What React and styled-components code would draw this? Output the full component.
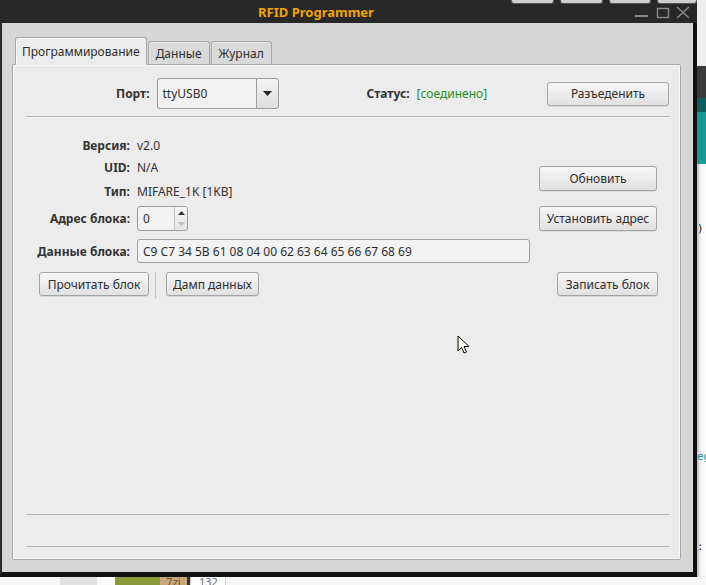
import React from "react";
import styled, { createGlobalStyle } from "styled-components";

const Global = createGlobalStyle`
  html, body { margin: 0; padding: 0; background: #f4f4f4; }
  body {
    font-family: "Noto Sans", "Open Sans", "DejaVu Sans", sans-serif;
    font-size: 12px;
    color: #333;
  }
`;

const Screen = styled.div`
  position: relative;
  width: 706px;
  height: 585px;
  overflow: hidden;
  display: grid;
  grid-template-columns: 697px 9px;
  grid-template-rows: 577px 8px;
  background: #f6f6f6;
`;

/* ---------- desktop behind the window ---------- */

const RightStrip = styled.div`
  grid-column: 2;
  grid-row: 1;
  display: flex;
  flex-direction: column;
  background: #fbfbfb;
  box-shadow: inset 3px 0 3px -1px rgba(0, 0, 0, 0.25);
`;

const Seg = styled.div`
  height: ${(p) => p.$h}px;
  flex: ${(p) => (p.$grow ? 1 : "none")};
  background: ${(p) => p.$bg || "transparent"};
  color: ${(p) => p.$fg || "#222"};
  font-family: "DejaVu Sans Mono", monospace;
  font-size: 11px;
  line-height: ${(p) => p.$h}px;
  white-space: nowrap;
  overflow: hidden;
`;

const BottomStrip = styled.div`
  grid-column: 1 / span 2;
  grid-row: 2;
  display: flex;
  background: #f7f7f7;
`;

const Thumb = styled.div`
  width: ${(p) => p.$w}px;
  background: ${(p) => p.$bg};
  color: ${(p) => p.$fg || "#666"};
  border-left: ${(p) => (p.$line ? "1px solid #cfcfcf" : "none")};
  border-right: ${(p) => (p.$line ? "1px solid #cfcfcf" : "none")};
  font-size: 11px;
  line-height: 8px;
  padding-top: 1px;
  text-align: center;
  overflow: hidden;
`;

/* ---------- window ---------- */

const Window = styled.div`
  grid-column: 1;
  grid-row: 1;
  display: flex;
  flex-direction: column;
  box-shadow: 2px 2px 4px rgba(0, 0, 0, 0.35);
`;

const TitleBar = styled.div`
  position: relative;
  height: 23px;
  flex: none;
  display: flex;
  align-items: center;
  background: #282828;
`;

const Title = styled.div`
  flex: 1;
  text-align: center;
  font-weight: 700;
  font-size: 13px;
  color: #f0a30a;
  padding-top: 1px;
`;

const Controls = styled.svg`
  width: 65px;
  height: 23px;
  flex: none;
`;

const PeekRow = styled.div`
  position: absolute;
  top: 0;
  left: 511px;
  display: flex;
  gap: 6px;
`;

const Peek = styled.div`
  width: ${(p) => p.$w}px;
  height: 3px;
  background: #cfcfcf;
  border: 1px solid #555;
  border-top: none;
  border-radius: 0 0 3px 3px;
`;

const Frame = styled.div`
  flex: 1;
  display: flex;
  flex-direction: column;
  background: #d6d6d6;
  border-left: 2px solid #2a2a2a;
  border-right: 4px solid #111;
  border-bottom: 5px solid #111;
  padding: 15px 12px 12px 10px;
  min-height: 0;
`;

const TabBar = styled.div`
  display: flex;
  align-items: flex-end;
  gap: 1px;
  height: 27px;
  padding-left: 3px;
  margin-bottom: -1px;
  position: relative;
  z-index: 1;
`;

const Tab = styled.div`
  box-sizing: border-box;
  height: ${(p) => (p.$active ? 28 : 24)}px;
  padding: 0 ${(p) => (p.$active ? 6 : 7)}px;
  display: flex;
  align-items: center;
  background: ${(p) => (p.$active ? "#ececec" : "#d9d9d9")};
  border: 1px solid #a7a7a7;
  border-bottom: ${(p) => (p.$active ? "1px solid #ececec" : "1px solid #a9a9a9")};
  border-radius: 3px 3px 0 0;
  color: #2e2e2e;
  box-shadow: ${(p) => (p.$active ? "inset 1px 1px 0 #fafafa" : "inset 1px 1px 0 #e6e6e6")};
`;

const Pane = styled.div`
  flex: 1;
  display: flex;
  flex-direction: column;
  background: #ececec;
  border: 1px solid #a9a9a9;
  border-radius: 2px;
  box-shadow: inset 0 0 0 1px #f8f8f8;
  padding: 13px 10px 12px 13px;
  min-height: 0;
`;

/* ---------- controls ---------- */

const TopRow = styled.div`
  display: flex;
  align-items: center;
  height: 31px;
  padding-left: 90px;
`;

const Label = styled.span`
  font-weight: 700;
  color: #333;
  margin-right: ${(p) => p.$mr || 0}px;
  margin-left: ${(p) => p.$ml || 0}px;
  white-space: nowrap;
`;

const StatusValue = styled.span`
  color: #1f8f1f;
  white-space: nowrap;
`;

const Combo = styled.div`
  width: 122px;
  height: 31px;
  display: flex;
  box-sizing: border-box;
`;

const ComboField = styled.div`
  flex: 1;
  display: flex;
  align-items: center;
  padding-left: 5px;
  background: #f2f2f2;
  border: 1px solid #9c9c9c;
  border-right: none;
  border-radius: 3px 0 0 3px;
  color: #2e2e2e;
`;

const ComboButton = styled.div`
  width: 21px;
  display: flex;
  align-items: center;
  justify-content: center;
  background: linear-gradient(#f4f4f4, #dedede);
  border: 1px solid #9c9c9c;
  border-radius: 0 3px 3px 0;
`;

const Button = styled.button`
  box-sizing: border-box;
  width: ${(p) => p.$w}px;
  height: ${(p) => p.$h || 24}px;
  margin-left: ${(p) => (p.$push ? "auto" : "0")};
  margin-right: ${(p) => p.$mr || 0}px;
  padding: 0;
  font-family: inherit;
  font-size: 12px;
  color: #2e2e2e;
  background: linear-gradient(#f7f7f7, #e1e1e1);
  border: 1px solid #a4a4a4;
  border-radius: 3px;
  box-shadow: 0 1px 0 rgba(0, 0, 0, 0.07);
  white-space: nowrap;
`;

const Separator = styled.div`
  margin-top: 7px;
  border-top: 1px solid #b4b4b4;
  border-bottom: 1px solid #f7f7f7;
`;

const FormArea = styled.div`
  display: flex;
  margin-top: 15px;
`;

const FormGrid = styled.div`
  display: grid;
  grid-template-columns: 104px 393px;
  grid-template-rows: 24px 20px 28px 27px 38px;
  column-gap: 7px;
  align-items: center;
`;

const FormLabel = styled.div`
  font-weight: 700;
  color: #333;
  text-align: right;
  white-space: nowrap;
`;

const Value = styled.div`
  color: #333;
`;

const SideButtons = styled.div`
  display: flex;
  flex-direction: column;
  gap: 15px;
  padding-top: 33px;
  margin-left: 9px;
`;

const Spin = styled.div`
  width: 51px;
  height: 25px;
  display: flex;
  box-sizing: border-box;
  border: 1px solid #9c9c9c;
  border-radius: 3px;
  background: #f3f3f3;
  overflow: hidden;
`;

const SpinField = styled.div`
  flex: 1;
  display: flex;
  align-items: center;
  padding-left: 5px;
  color: #2e2e2e;
`;

const SpinArrows = styled.div`
  width: 12px;
  display: flex;
  flex-direction: column;
  align-items: center;
  justify-content: space-around;
  border-left: 1px solid #c4c4c4;
  background: linear-gradient(#f6f6f6, #e4e4e4);
`;

const LineEdit = styled.div`
  box-sizing: border-box;
  height: 24px;
  display: flex;
  align-items: center;
  padding-left: 5px;
  background: #f3f3f3;
  border: 1px solid #a2a2a2;
  border-radius: 3px;
  color: #2e2e2e;
  white-space: nowrap;
`;

const BottomRow = styled.div`
  display: flex;
  align-items: flex-start;
  margin-top: 2px;
  padding-left: 13px;
`;

const VSep = styled.div`
  width: 1px;
  height: 27px;
  margin: 0 10px 0 6px;
  background: #c2c2c2;
`;

const Fill = styled.div`
  flex: 1;
`;

const Footer = styled.div`
  display: flex;
  flex-direction: column;
  gap: 31px;
`;

const HLine = styled.div`
  height: 1px;
  background: #b5b5b5;
`;

const Cursor = styled.svg`
  position: absolute;
  left: 457px;
  top: 335px;
  width: 13px;
  height: 19px;
`;

export default function App() {
  return (
    <>
      <Global />
      <Screen>
        <Window>
          <TitleBar>
            <PeekRow>
              <Peek $w={41} />
              <Peek $w={41} />
              <Peek $w={40} />
              <Peek $w={38} />
            </PeekRow>
            <Title>RFID Programmer</Title>
            <Controls viewBox="0 0 65 23">
              <rect x="3" y="15" width="13" height="2" fill="#8a8a8a" />
              <rect x="25.5" y="8.5" width="11" height="9" fill="none" stroke="#8a8a8a" strokeWidth="1.4" />
              <path d="M45 7 L57 18 M57 7 L45 18" stroke="#8a8a8a" strokeWidth="1.5" />
            </Controls>
          </TitleBar>
          <Frame>
            <TabBar>
              <Tab $active>Программирование</Tab>
              <Tab>Данные</Tab>
              <Tab>Журнал</Tab>
            </TabBar>
            <Pane>
              <TopRow>
                <Label $mr={7}>Порт:</Label>
                <Combo>
                  <ComboField>ttyUSB0</ComboField>
                  <ComboButton>
                    <svg width="9" height="5" viewBox="0 0 9 5">
                      <path d="M0 0 H9 L4.5 5 Z" fill="#222" />
                    </svg>
                  </ComboButton>
                </Combo>
                <Label $ml={88} $mr={7}>Статус:</Label>
                <StatusValue>[соединено]</StatusValue>
                <Button $w={122} $push $mr={1}>Разъеденить</Button>
              </TopRow>
              <Separator />
              <FormArea>
                <FormGrid>
                  <FormLabel>Версия:</FormLabel>
                  <Value>v2.0</Value>
                  <FormLabel>UID:</FormLabel>
                  <Value>N/A</Value>
                  <FormLabel>Тип:</FormLabel>
                  <Value>MIFARE_1K [1KB]</Value>
                  <FormLabel>Адрес блока:</FormLabel>
                  <Spin>
                    <SpinField>0</SpinField>
                    <SpinArrows>
                      <svg width="7" height="4" viewBox="0 0 7 4">
                        <path d="M0 4 L3.5 0 L7 4 Z" fill="#333" />
                      </svg>
                      <svg width="7" height="4" viewBox="0 0 7 4">
                        <path d="M0 0 L3.5 4 L7 0 Z" fill="#bdbdbd" />
                      </svg>
                    </SpinArrows>
                  </Spin>
                  <FormLabel>Данные блока:</FormLabel>
                  <LineEdit>C9 C7 34 5B 61 08 04 00 62 63 64 65 66 67 68 69</LineEdit>
                </FormGrid>
                <SideButtons>
                  <Button $w={118} $h={25}>Обновить</Button>
                  <Button $w={118} $h={25}>Установить адрес</Button>
                </SideButtons>
              </FormArea>
              <BottomRow>
                <Button $w={110}>Прочитать блок</Button>
                <VSep />
                <Button $w={93}>Дамп данных</Button>
                <Button $w={101} $push $mr={12}>Записать блок</Button>
              </BottomRow>
              <Fill />
              <Footer>
                <HLine />
                <HLine />
              </Footer>
            </Pane>
          </Frame>
        </Window>

        <RightStrip>
          <Seg $h={66} $bg="#eeeeee" />
          <Seg $h={32} $bg="#3a3a3a" />
          <Seg $h={14} $bg="#0e5c5c" />
          <Seg $h={52} $bg="#1a9797" />
          <Seg $h={58} />
          <Seg $h={14}>) ;</Seg>
          <Seg $h={214} />
          <Seg $h={14} $fg="#1a9090">eg</Seg>
          <Seg $h={76} />
          <Seg $h={14}>:</Seg>
          <Seg $grow />
        </RightStrip>

        <BottomStrip>
          <Thumb $w={60} $bg="#f7f7f7" />
          <Thumb $w={37} $bg="#e2e2e2" />
          <Thumb $w={18} $bg="#fafafa" />
          <Thumb $w={45} $bg="#8a9a3a" />
          <Thumb $w={28} $bg="#c9a77a" $fg="#6a5030">7zi</Thumb>
          <Thumb $w={3} $bg="#333" />
          <Thumb $w={34} $bg="#ffffff" $line>132</Thumb>
          <Thumb $w={481} $bg="#f7f7f7" />
        </BottomStrip>

        <Cursor viewBox="0 0 13 19">
          <path
            d="M1 1 L1 16 L4.5 12.5 L7 18 L9.5 17 L7 11.5 L12 11.5 Z"
            fill="#fdfbef"
            stroke="#000"
            strokeWidth="1"
            strokeLinejoin="round"
          />
        </Cursor>
      </Screen>
    </>
  );
}
